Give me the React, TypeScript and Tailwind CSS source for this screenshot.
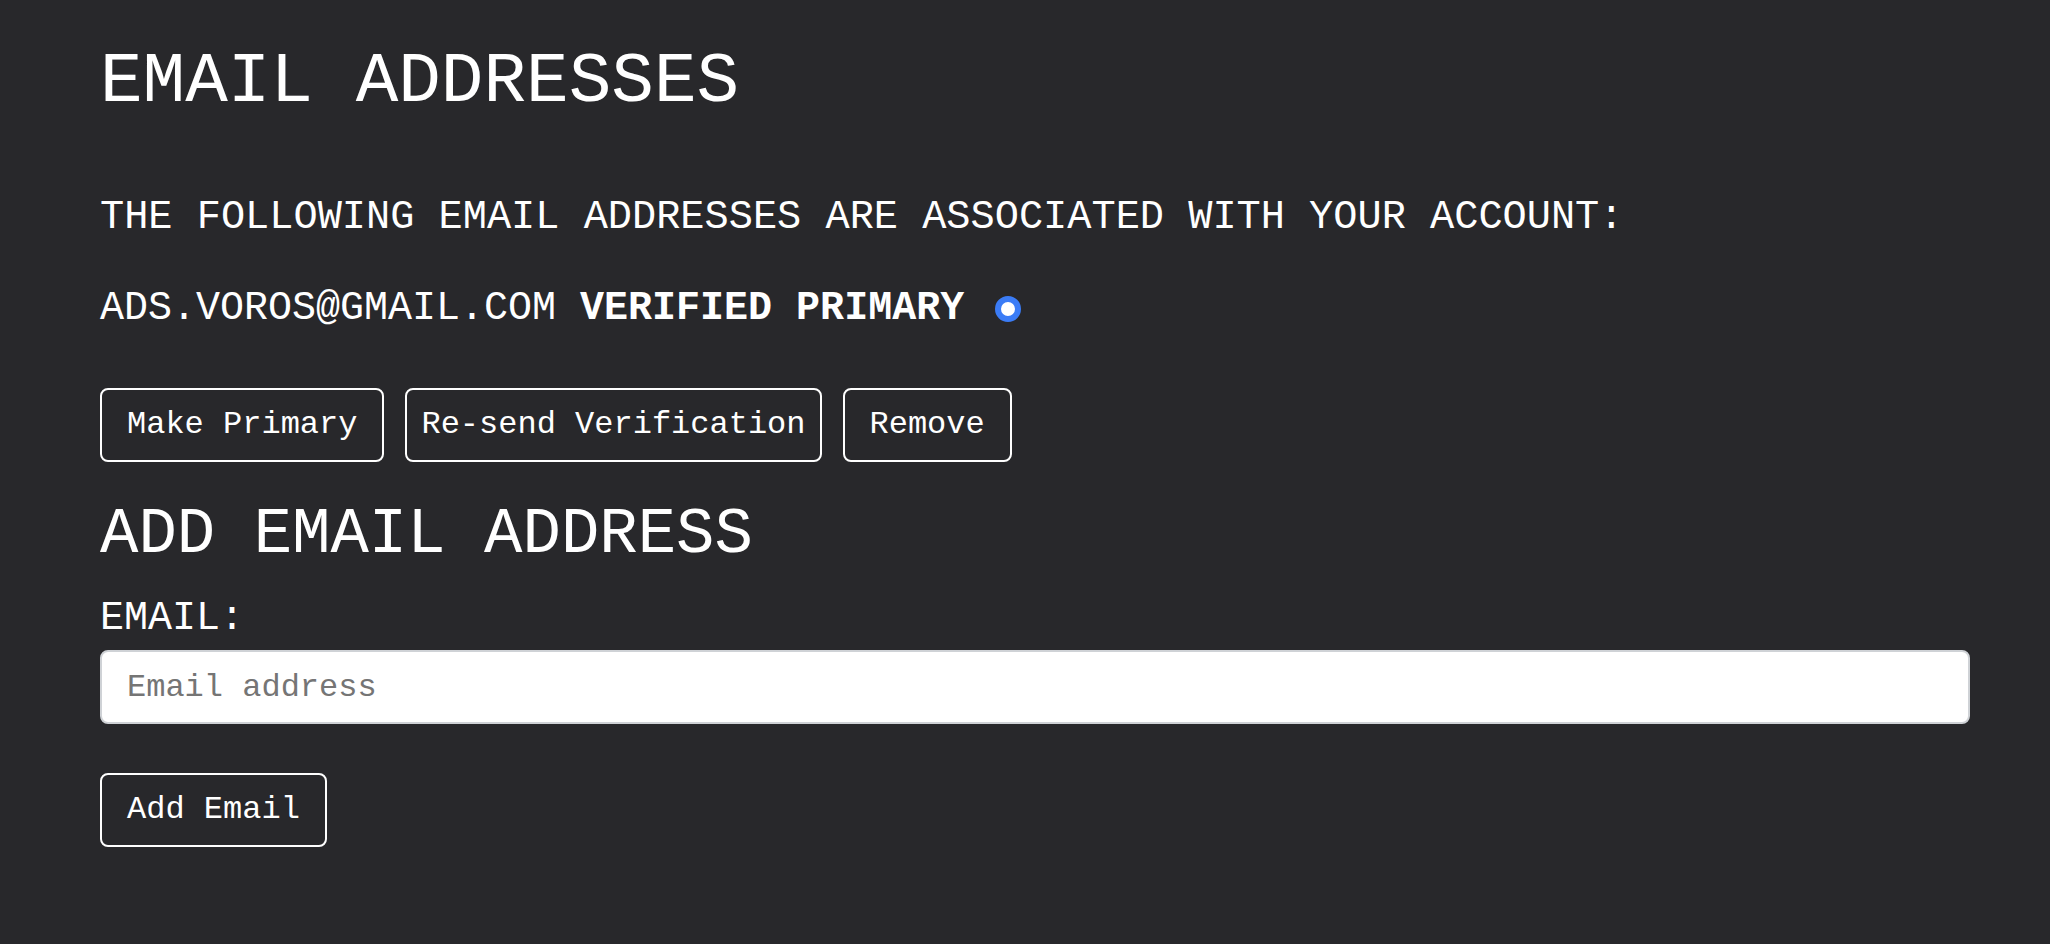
import React from "react";

const mono = { fontFamily: '"Courier New", "Liberation Mono", monospace' };

function Btn({ label, px = "px-[25px]" }: { label: string; px?: string }) {
  return (
    <button
      type="button"
      className={`h-[74px] ${px} border-2 border-white rounded-lg text-[32px] leading-none text-white bg-transparent flex items-center`}
      style={mono}
    >
      {label}
    </button>
  );
}

export default function App() {
  return (
    <div className="min-h-[944px] w-full bg-[#28282b] text-white" style={mono}>
      <div className="pl-[100px] pr-[80px] pt-[47px] flex flex-col">
        <h1 className="text-[71px] leading-[71px] font-normal">EMAIL ADDRESSES</h1>
        <p className="mt-[79px] text-[40.3px] leading-[40px]">
          THE FOLLOWING EMAIL ADDRESSES ARE ASSOCIATED WITH YOUR ACCOUNT:
        </p>
        <div className="mt-[52px] flex items-center text-[40px] leading-[40px]">
          <span>ADS.VOROS@GMAIL.COM </span>
          <span className="font-bold">&nbsp;VERIFIED PRIMARY</span>
          <span className="ml-[31px] w-[26px] h-[26px] rounded-full bg-white border-[6px] border-[#3b7cf6] inline-block"></span>
        </div>
        <div className="mt-[59px] flex gap-[21px]">
          <Btn label="Make Primary" />
          <Btn label="Re-send Verification" px="px-[14px]" />
          <Btn label="Remove" />
        </div>
        <h2 className="mt-[41px] text-[64px] leading-[64px] font-normal">ADD EMAIL ADDRESS</h2>
        <label className="mt-[32px] text-[40px] leading-[40px]">EMAIL:</label>
        <input
          type="email"
          placeholder="Email address"
          className="mt-[11px] h-[74px] w-full bg-white border-2 border-[#cfd2d6] rounded-lg px-[25px] text-[32px] text-black placeholder:text-[#757575] outline-none"
          style={mono}
        />
        <div className="mt-[49px] flex">
          <Btn label="Add Email" />
        </div>
      </div>
    </div>
  );
}
